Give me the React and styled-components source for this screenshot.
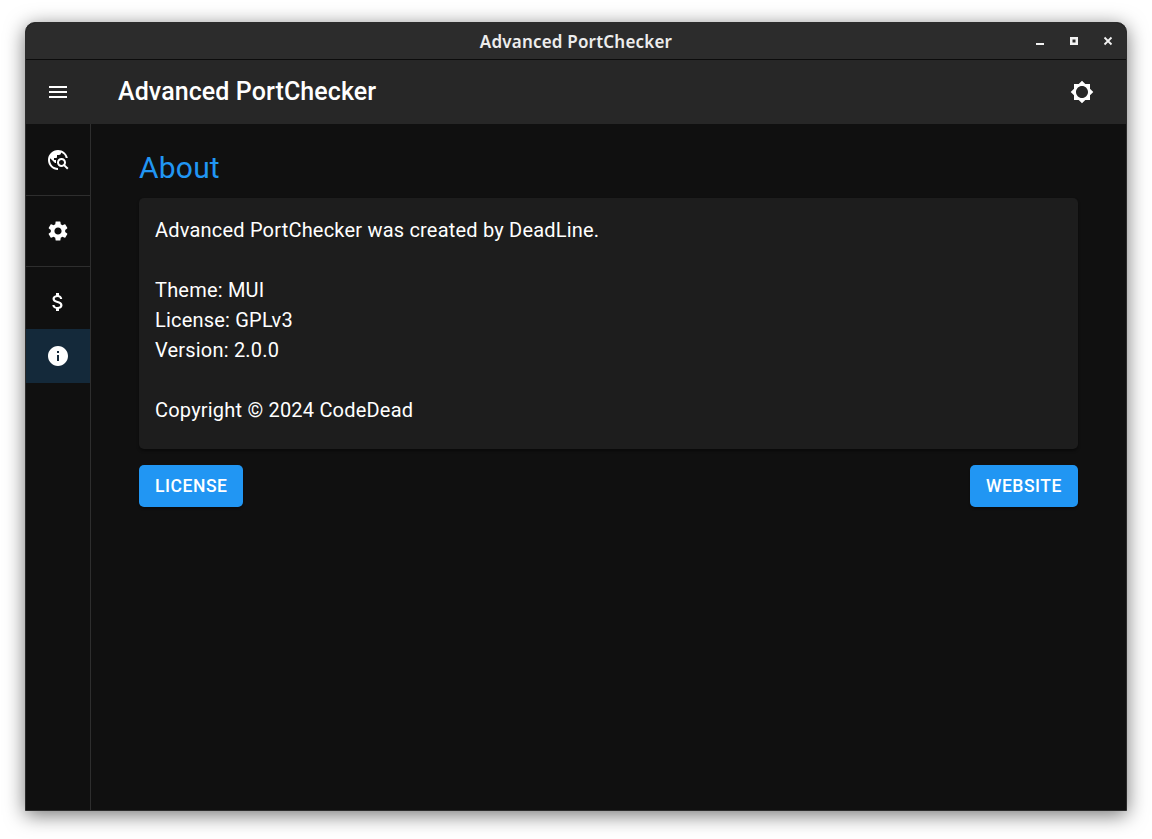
import React from "react";
import styled, { createGlobalStyle } from "styled-components";
import { MdMenu, MdBrightness5, MdTravelExplore, MdSettings, MdAttachMoney, MdInfo } from "react-icons/md";

const Global = createGlobalStyle`
  html, body { margin: 0; padding: 0; background: #fff; }
  body { width: 1152px; height: 839px; overflow: hidden; font-family: Roboto, "Liberation Sans", sans-serif; }
  * { box-sizing: border-box; }
`;
const Stage = styled.div`
  width: 1152px; height: 839px; padding: 22px 25px 28px 25px;
`;
const Win = styled.div`
  width: 1102px; height: 789px; display: flex; flex-direction: column;
  border: 1px solid #2c2c2c;
  border-radius: 10px 10px 0 0; overflow: hidden; background: #101010;
  box-shadow: 0 4px 20px rgba(0,0,0,.55);
`;
const TitleBar = styled.div`
  height: 37px; flex: none; position: relative; display: flex; align-items: center; justify-content: center;
  background: #2c2c2c; border-bottom: 1px solid #0c0c0c;
  font: 600 17px "Noto Sans", "Open Sans", sans-serif; letter-spacing: .2px; color: #ededed;
`;
const WinControls = styled.div`
  position: absolute; right: 1px; top: 0; height: 36px; display: flex; align-items: center;
`;
const WinBtn = styled.button`
  width: 34px; height: 36px; border: 0; padding: 0; background: none; display: flex; align-items: center; justify-content: center;
  color: #f2f2f2;
`;
const AppBar = styled.header`
  height: 64px; flex: none; display: flex; align-items: center; background: #272727; padding: 0 32px 0 20px; color: #fff;
`;
const MenuBtn = styled.div`
  width: 24px; height: 24px; font-size: 24px; display: flex; margin-right: 48px;
`;
const AppTitle = styled.h1`
  flex: 1; margin: 0; font-size: 25px; font-weight: 500; letter-spacing: .09px; line-height: 32px;
`;
const ThemeBtn = styled.div`
  width: 24px; height: 24px; font-size: 24px; display: flex; margin-right: 0;
`;
const Body = styled.div`
  flex: 1; display: flex; min-height: 0;
`;
const Side = styled.nav`
  width: 65px; flex: none; border-right: 1px solid #2e2e2e; background: #101010; display: flex; flex-direction: column;
`;
const NavItem = styled.div`
  height: ${p => p.$h}px; display: flex; align-items: center; justify-content: center; color: #fff; font-size: 24px;
  padding-top: ${p => p.$drop || 0}px;
  background: ${p => p.$active ? "#14293a" : "transparent"};
  border-bottom: ${p => p.$line ? "1px solid #2e2e2e" : "0"};
`;
const Main = styled.main`
  flex: 1; padding: 24px 48px 0 48px; display: flex; flex-direction: column;
`;
const Heading = styled.h2`
  margin: 0; font-size: 30px; font-weight: 400; line-height: 40px; color: #2196f3; letter-spacing: .2px;
`;
const Card = styled.section`
  margin-top: 10px; height: 251px; background: #1d1d1d; border-radius: 5px; padding: 17px 16px 0; color: #fff;
  font-size: 20px; line-height: 30px; box-shadow: 0 2px 3px rgba(0,0,0,.4);
`;
const Line = styled.div`
  min-height: 30px; letter-spacing: .2px;
`;
const Actions = styled.div`
  margin-top: 16px; display: flex; justify-content: space-between;
`;
const Button = styled.button`
  height: 42px; padding: 0 16px; border: 0; border-radius: 5px; background: #2196f3; color: #fff;
  font: 500 17.5px Roboto, sans-serif; letter-spacing: .55px; text-transform: uppercase;
  box-shadow: 0 2px 2px rgba(0,0,0,.3);
`;

export default function App() {
  return (
    <Stage>
      <Global />
      <Win>
        <TitleBar>
          Advanced PortChecker
          <WinControls>
            <WinBtn>
              <svg width="10" height="10" viewBox="0 0 10 10"><rect x="1" y="7" width="8" height="2" fill="currentColor" /></svg>
            </WinBtn>
            <WinBtn>
              <svg width="10" height="10" viewBox="0 0 10 10"><path fillRule="evenodd" d="M1 1h8v8H1zM3.5 3.5v3h3v-3z" fill="currentColor" /></svg>
            </WinBtn>
            <WinBtn>
              <svg width="10" height="10" viewBox="0 0 10 10"><path d="M1.5 1.5l7 7M8.5 1.5l-7 7" stroke="currentColor" strokeWidth="1.8" /></svg>
            </WinBtn>
          </WinControls>
        </TitleBar>
        <AppBar>
          <MenuBtn><MdMenu /></MenuBtn>
          <AppTitle>Advanced PortChecker</AppTitle>
          <ThemeBtn><MdBrightness5 /></ThemeBtn>
        </AppBar>
        <Body>
          <Side>
            <NavItem $h={72} $line><MdTravelExplore /></NavItem>
            <NavItem $h={71} $line><MdSettings /></NavItem>
            <NavItem $h={62} $drop={8}><MdAttachMoney /></NavItem>
            <NavItem $h={54} $active><MdInfo /></NavItem>
          </Side>
          <Main>
            <Heading>About</Heading>
            <Card>
              <Line>Advanced PortChecker was created by DeadLine.</Line>
              <Line />
              <Line>Theme: MUI</Line>
              <Line>License: GPLv3</Line>
              <Line>Version: 2.0.0</Line>
              <Line />
              <Line>Copyright © 2024 CodeDead</Line>
            </Card>
            <Actions>
              <Button>License</Button>
              <Button>Website</Button>
            </Actions>
          </Main>
        </Body>
      </Win>
    </Stage>
  );
}
